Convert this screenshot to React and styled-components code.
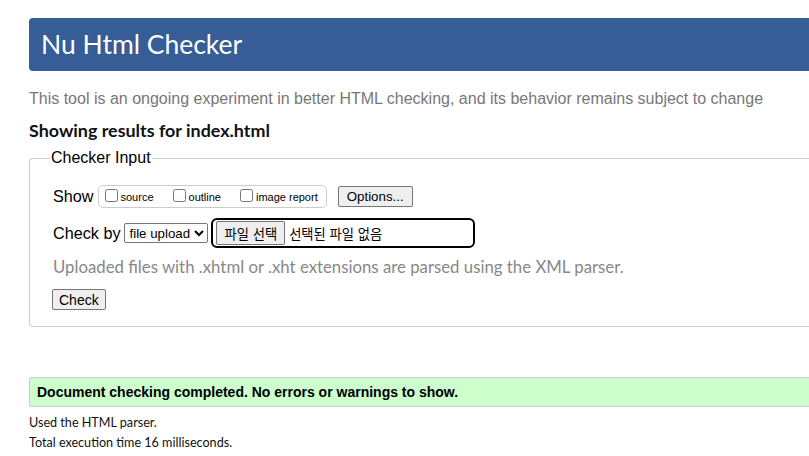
import React from "react";
import styled, { createGlobalStyle } from "styled-components";

const GlobalStyle = createGlobalStyle`
  html, body {
    margin: 0;
    padding: 0;
    background: #fff;
    overflow: hidden;
  }
  body {
    font-family: "Liberation Sans", Arial, sans-serif;
    color: #000;
  }
`;

const Page = styled.div`
  width: 1100px;
  padding: 18px 0 0 29px;
  box-sizing: border-box;
`;

const Header = styled.h1`
  margin: 0;
  height: 53px;
  background: #365d95;
  border-radius: 4px 0 0 4px;
  color: #fff;
  font-family: "Lato", "Noto Sans", sans-serif;
  font-weight: 400;
  font-size: 26.5px;
  line-height: 53px;
  padding-left: 12px;
`;

const Intro = styled.p`
  margin: 18px 0 0;
  color: #777;
  font-size: 16px;
  line-height: 20px;
`;

const Showing = styled.h2`
  margin: 11px 0 0;
  font-family: "Lato", "Noto Sans", sans-serif;
  font-weight: 700;
  font-size: 17.9px;
  line-height: 20px;
  color: #111;
`;

const Fieldset = styled.fieldset`
  margin: 9px 0 0;
  padding: 8px 22px 16px 22px;
  border: 1px solid #ccc;
  border-right: none;
  border-radius: 4px 0 0 4px;
`;

const Legend = styled.legend`
  padding: 0 1px;
  margin-left: -2px;
  font-size: 16px;
  line-height: 18px;
`;

const Row = styled.div`
  display: flex;
  align-items: center;
  gap: 3px;
  margin-top: ${(p) => p.$top || 0}px;
`;

const Label = styled.span`
  font-size: 16.2px;
  margin-left: 1px;
`;

const Options = styled.span`
  display: inline-flex;
  align-items: center;
  height: 21px;
  padding: 0 8px 0 6px;
  border: 1px solid #ccc;
  border-radius: 5px;
  margin: 0 8px 0 1px;
`;

const CheckLabel = styled.label`
  display: inline-flex;
  align-items: center;
  font-size: 11px;
  margin-right: ${(p) => p.$gap || 0}px;
`;

const Box = styled.input.attrs({ type: "checkbox" })`
  width: 13px;
  height: 13px;
  margin: 0 3px 2px 0;
`;

const Button = styled.button`
  font-family: "Liberation Sans", Arial, sans-serif;
  font-size: 13.3px;
  height: 21px;
  padding: 0 8px;
  background: #efefef;
  border: 1px solid #767676;
  border-radius: 2px;
  color: #000;
`;

const CheckButton = styled(Button)`
  font-size: 14px;
  padding: 0 6px;
`;

const Select = styled.select`
  font-family: "Liberation Sans", Arial, sans-serif;
  font-size: 13.3px;
  height: 20px;
  width: 84px;
  margin-left: 1px;
  border: 1px solid #767676;
  border-radius: 2px;
  background: #fff;
  color: #000;
`;

const FileWrap = styled.span`
  display: inline-flex;
  align-items: center;
  gap: 4px;
  width: 254px;
  height: 26px;
  padding: 0 3px;
  border: 2px solid #000;
  border-radius: 6px;
`;

const FileButton = styled(Button)`
  font-family: "Liberation Sans", "Noto Sans CJK KR", sans-serif;
  height: 24px;
  padding: 0 7px;
`;

const FileText = styled.span`
  font-family: "Liberation Sans", "Noto Sans CJK KR", sans-serif;
  font-size: 13.3px;
`;

const Hint = styled.p`
  margin: 8px 0 0 1px;
  color: #888;
  font-family: "Lato", "Noto Sans", sans-serif;
  font-size: 16.8px;
  line-height: 22px;
`;

const Success = styled.p`
  margin: 50px 0 0;
  height: 28px;
  line-height: 28px;
  padding-left: 7px;
  background: #ccffcc;
  border: 1px solid #ccc;
  border-right: none;
  border-radius: 3px 0 0 3px;
  font-weight: 700;
  font-size: 14px;
`;

const Note = styled.p`
  margin: ${(p) => p.$top}px 0 0;
  font-family: "Lato", "Noto Sans", sans-serif;
  font-size: 12.6px;
  line-height: 16px;
  color: #111;
`;

export default function App() {
  return (
    <>
      <GlobalStyle />
      <Page>
        <Header>Nu Html Checker</Header>
        <Intro>
          This tool is an ongoing experiment in better HTML checking, and its
          behavior remains subject to change
        </Intro>
        <Showing>Showing results for index.html</Showing>
        <Fieldset>
          <Legend>Checker Input</Legend>
          <Row $top={10}>
            <Label>Show</Label>
            <Options>
              <CheckLabel $gap={19}>
                <Box />
                source
              </CheckLabel>
              <CheckLabel $gap={19}>
                <Box />
                outline
              </CheckLabel>
              <CheckLabel>
                <Box />
                image report
              </CheckLabel>
            </Options>
            <Button>Options...</Button>
          </Row>
          <Row $top={10}>
            <Label>Check by</Label>
            <Select defaultValue="file">
              <option value="file">file upload</option>
              <option value="address">address</option>
              <option value="text">text input</option>
            </Select>
            <FileWrap>
              <FileButton>파일 선택</FileButton>
              <FileText>선택된 파일 없음</FileText>
            </FileWrap>
          </Row>
          <Hint>
            Uploaded files with .xhtml or .xht extensions are parsed using the
            XML parser.
          </Hint>
          <Row $top={11}>
            <CheckButton>Check</CheckButton>
          </Row>
        </Fieldset>
        <Success>
          Document checking completed. No errors or warnings to show.
        </Success>
        <Note $top={8}>Used the HTML parser.</Note>
        <Note $top={4}>Total execution time 16 milliseconds.</Note>
      </Page>
    </>
  );
}
